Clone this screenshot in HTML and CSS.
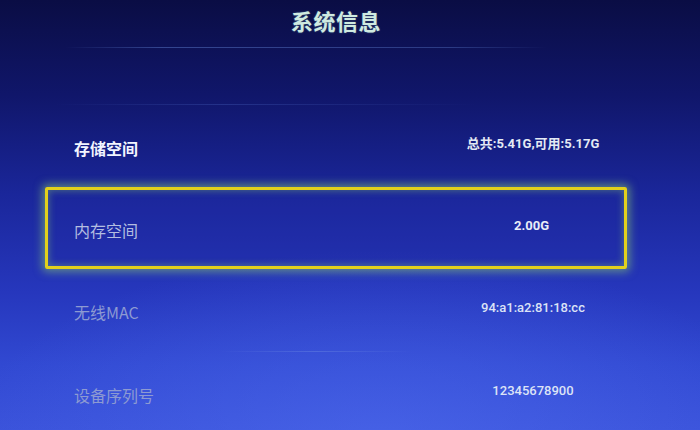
FILE: index.html
```html
<!DOCTYPE html>
<html lang="zh-CN">
<head>
<meta charset="utf-8">
<title>系统信息</title>
<link rel="stylesheet" href="styles.css">
</head>
<body>
<div class="screen">
  <div class="panel">
    <h1 class="title">系统信息</h1>
    <div class="rule rule-title"></div>
    <div class="spacer"></div>
    <div class="rule rule-top"></div>
    <div class="list">
      <div class="row row-active">
        <span class="label">存储空间</span>
        <span class="value">总共:5.41G,可用:5.17G</span>
      </div>
      <div class="row row-focus">
        <span class="label">内存空间</span>
        <span class="value">2.00G</span>
      </div>
      <div class="row row-dim">
        <span class="label">无线MAC</span>
        <span class="value">94:a1:a2:81:18:cc</span>
      </div>
      <div class="rule rule-mid"></div>
      <div class="row row-dim">
        <span class="label">设备序列号</span>
        <span class="value">12345678900</span>
      </div>
    </div>
  </div>
</div>
</body>
</html>
```
FILE: styles.css
```css
html, body {
  margin: 0;
  padding: 0;
  width: 700px;
  height: 430px;
  overflow: hidden;
}
body {
  font-family: "Noto Sans CJK SC", "Noto Sans", sans-serif;
  background:
    radial-gradient(ellipse 420px 200px at 380px 450px, rgba(80, 110, 240, 0.55), rgba(80, 110, 240, 0) 100%),
    linear-gradient(180deg, #0a0d44 0%, #10166a 22%, #1a269a 45%, #2637bd 68%, #3149d2 85%, #3a52da 100%);
}
.screen {
  width: 700px;
  height: 430px;
}
.panel {
  margin-left: 45px;
  width: 582px;
  display: flex;
  flex-direction: column;
}
.title {
  margin: 0;
  height: 47px;
  padding-top: 4px;
  box-sizing: border-box;
  text-align: center;
  font-size: 22px;
  line-height: 32px;
  font-weight: 700;
  color: #cfeae0;
  text-shadow: 0 0 2px rgba(180, 240, 220, 0.35);
  letter-spacing: 0.5px;
}
.rule {
  height: 1px;
  flex: none;
}
.rule-title {
  margin: 0 80px 0 20px;
  background: linear-gradient(90deg, rgba(90, 120, 200, 0) 0%, rgba(90, 120, 200, 0.5) 20%, rgba(90, 120, 200, 0.4) 80%, rgba(90, 120, 200, 0) 100%);
}
.spacer {
  height: 56px;
}
.rule-top {
  margin: 0 150px 0 10px;
  background: linear-gradient(90deg, rgba(80, 110, 200, 0) 0%, rgba(80, 110, 200, 0.3) 40%, rgba(80, 110, 200, 0) 100%);
}
.rule-mid {
  margin: 0 215px 0 175px;
  background: linear-gradient(90deg, rgba(120, 150, 230, 0) 0%, rgba(120, 150, 230, 0.35) 50%, rgba(120, 150, 230, 0) 100%);
}
.list {
  display: flex;
  flex-direction: column;
}
.row {
  height: 82px;
  box-sizing: border-box;
  display: grid;
  grid-template-columns: 1fr 188px;
  align-items: center;
  padding-left: 29px;
}
.row-focus {
  border: 3px solid #e2d11c;
  border-radius: 2px;
  padding-left: 26px;
  background: rgba(30, 40, 160, 0.25);
  box-shadow:
    0 0 9px 3px rgba(140, 205, 110, 0.55),
    inset 0 0 7px 1px rgba(140, 205, 110, 0.4);
}
.row-focus .value {
  margin-right: -3px;
}
.label {
  font-size: 16px;
  line-height: 20px;
  padding-top: 3px;
  white-space: nowrap;
}
.value {
  font-family: Roboto, "Noto Sans CJK SC", sans-serif;
  font-size: 13px;
  font-weight: 500;
  line-height: 16px;
  text-align: center;
  white-space: nowrap;
  padding-bottom: 4px;
}
.row-active .label {
  color: #f2f5ff;
  font-weight: 700;
}
.row-active .value {
  color: #e4eaf4;
  font-weight: 700;
}
.row-focus .label {
  color: #b3bde0;
}
.row-focus .value {
  color: #e8ecf8;
  font-weight: 700;
}
.row-dim .label {
  color: #8d9ad2;
}
.row-dim .value {
  color: #dce3f6;
}
```
